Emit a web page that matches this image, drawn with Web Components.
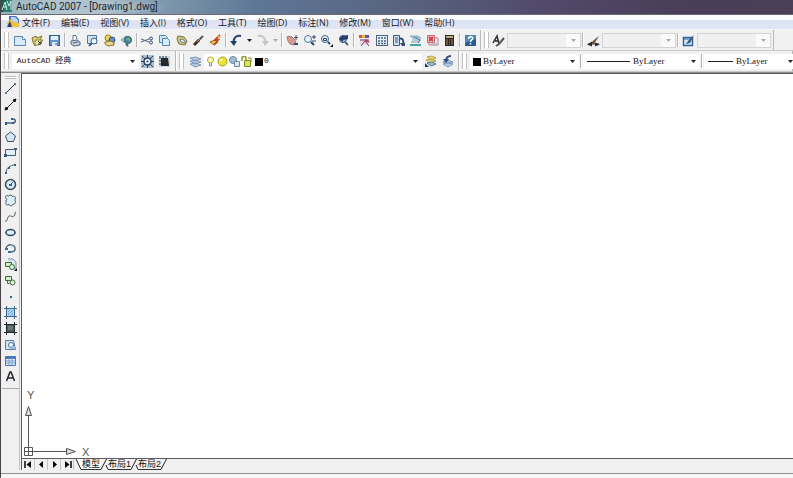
<!DOCTYPE html>
<html lang="zh-CN">
<head>
<meta charset="utf-8">
<title>AutoCAD 2007 - [Drawing1.dwg]</title>
<style>
html, body { margin: 0; height: 100%; }
body { overflow: hidden; background: #f0f0f0; }
</style>
</head>
<body>
<cad-window></cad-window>
<script>
const ICONS = {
  app: '<rect width="11" height="12" fill="#2f7f73"/><path d="M0 0h5L2 12H0z" fill="#1d5c58"/><path d="M1 10 4 2l2 8M6 1l2 5 2-5v9M2 7h4" stroke="#c9f0e4" fill="none"/>',
  doc: '<path d="M2 0h7l3 3v8H2z" fill="#4a79bd"/><path d="M4 1h4l3 3v3H4z" fill="#bcd3f2"/><path d="M0 7l4-4 2 3 6 1v4H1z" fill="#f0bf3c"/><path d="M0 11 3 5l2 6z" fill="#31405e"/>',
  new: '<path d="M.5 2.500h8l3 3v6h-11z" fill="#d6eaf8" stroke="#5d87ab"/><path d="M8.500 2.500v3h3" fill="#fff" stroke="#5d87ab"/>',
  open: '<path d="M1 4l4-2 1 2 5-2-2 4-5 6-2-4z" fill="#e0d27a" stroke="#77752f"/><path d="M4 6h8l-4 5H4z" fill="#f5eaa5" stroke="#8f8636"/><path d="M7 7l3 3M10 7v3H7" stroke="#333" fill="none"/>',
  save: '<rect x="1.500" y="1.500" width="10" height="10" fill="#5f94cc" stroke="#2f5f93"/><rect x="3" y="2" width="7" height="4" fill="#e3f0fb"/><rect x="4" y="8" width="5" height="4" fill="#dbe9f5"/><path d="M8 9v2" stroke="#2f5f93"/>',
  print: '<path d="M4 6V1.500h3l1 4" fill="#fff" stroke="#66788f"/><path d="M2 7l6-1 3 2v3l-6 1-3-2z" fill="#c5cfdd" stroke="#56687f"/><path d="M4 9l5-1" stroke="#56687f"/>',
  preview: '<path d="M1.500 1.500h9v8h-9z" fill="#cfe3f5" stroke="#52799f"/><circle cx="8" cy="7" r="3" fill="#eaf6ff" stroke="#40617f"/><path d="M6 9l-3 3" stroke="#40617f" stroke-width="2"/>',
  publish: '<circle cx="5" cy="4" r="3" fill="#f2d64f" stroke="#9a8020"/><circle cx="9" cy="6" r="3" fill="#5d8cc6" stroke="#31547f"/><path d="M2 8l6-1 3 2v2l-6 1-3-2z" fill="#ead785" stroke="#8a7430"/>',
  web: '<path d="M1 6l5-4 5 3-4 5z" fill="#a9c9dd" stroke="#7a9cb8"/><circle cx="8" cy="6" r="3.500" fill="#4f8ea0" stroke="#2f5f73"/><path d="M6 5l3-1 1 3" fill="#7dbb6b"/><path d="M6 10l2 2" stroke="#40617f" stroke-width="2"/>',
  cut: '<path d="M0 5l8 3M0 8l8-3" stroke="#56687f"/><circle cx="10" cy="4.500" r="1.500" fill="none" stroke="#34506f"/><circle cx="10" cy="8.500" r="1.500" fill="none" stroke="#34506f"/>',
  copy: '<path d="M1.500 1.500h6l2 2v5h-8z" fill="#cfe3f5" stroke="#4f86b3"/><path d="M4.500 4.500h5l2 2v5h-7z" fill="#d9ecf9" stroke="#4f86b3"/>',
  paste: '<path d="M3 2l6 1 3 4-2 4-6-1-2-5z" fill="#d9c97c" stroke="#7b6f38"/><path d="M5 5l4 1 2 3-5-1z" fill="#e8f3fb" stroke="#6b8095"/>',
  brush: '<path d="M11 2L6 7" stroke="#555" stroke-width="2"/><path d="M7 6L2 11" stroke="#4a2f23" stroke-width="3"/><path d="M8 5L5 8" stroke="#a98c70"/>',
  block: '<path d="M1 8l5-2 3 2-4 3z" fill="#ecd04a" stroke="#8a6d20"/><path d="M11 1L6 6l3 0-4 5" fill="none" stroke="#c24b22" stroke-width="2"/><path d="M9 2l2 2" stroke="#e9b93a" stroke-width="2"/>',
  undo: '<path d="M11 2C6 1 3 4 3.500 10" fill="none" stroke="#223f68" stroke-width="2"/><path d="M0 7h7l-3 5z" fill="#223f68"/>',
  redo: '<path d="M2 2c5-1 8 2 7.500 8" fill="none" stroke="#c3c7cb" stroke-width="2"/><path d="M6 7h7l-4 5z" fill="#c3c7cb"/>',
  pan: '<path d="M1 3l2-1 2 2V2l3 3 2 3-2 3-4-1-2-3z" fill="#d59c91" stroke="#b0746a"/><path d="M10 1v5M8 3.500h4" stroke="#334e75"/><path d="M8 10h4" stroke="#334e75" stroke-width="2"/>',
  zoomrt: '<circle cx="5" cy="5" r="3.500" fill="#e3f1fc" stroke="#56789a"/><path d="M8 8l3 3" stroke="#2e4564" stroke-width="2"/><path d="M11 1v4M9 3h4M9 7h4" stroke="#35475f"/>',
  zoomwin: '<circle cx="5" cy="5" r="3.500" fill="#e3f1fc" stroke="#41668c"/><path d="M3.500 4.500h3v2h-3z" fill="none" stroke="#345"/><path d="M8 8l2 2" stroke="#2e4564" stroke-width="2"/><path d="M13 10v3h-3z" fill="#111"/>',
  zoomprev: '<circle cx="6" cy="5" r="3.500" fill="#9fbbe0" stroke="#334f7d"/><path d="M8 8l3 3" stroke="#5a626e" stroke-width="2"/><path d="M11 1L5 2 2 5l4 3V6l5-1z" fill="#27406e"/>',
  props: '<path d="M1 1h3v3H1z" fill="#d94b4b"/><path d="M4 1h3v3H4z" fill="#efb52b"/><path d="M7 1h4v3H7z" fill="#5454c6"/><path d="M2 5h8v6H2z" fill="#ecd7e6"/><path d="M2 6h9M3 12l4-5 4 5" stroke="#74416f" fill="none"/><path d="M7 6l4 2" stroke="#b24a55" stroke-width="2"/>',
  center: '<rect x="1.500" y="1.500" width="11" height="10" fill="#e4f0f8" stroke="#49637e"/><path d="M3 4h2M6 4h2M9 4h2M3 7h2M6 7h2M9 7h2M3 9.500h2M6 9.500h2M9 9.500h2" stroke="#49637e" stroke-width="1.500"/>',
  palettes: '<path d="M1.500 1.500h6v10h-6z" fill="#cfe0f1" stroke="#395c89"/><path d="M3 4h3M3 6h3M3 8h3" stroke="#395c89"/><path d="M7 4.500h2c2 0 2.500 2 2.500 6" fill="none" stroke="#2c4a74" stroke-width="2"/><path d="M8 9h5v3h-3z" fill="#2c4a74"/>',
  sheet: '<path d="M1 2h8l3 2H4z" fill="#9fc5da" stroke="#8aaec6"/><path d="M3 6h9M2 8h9" stroke="#7c9fb8"/><path d="M5 3l6 3-2 3" fill="none" stroke="#4d7ca0"/><path d="M1 11h11" stroke="#48a3a7" stroke-width="2"/>',
  markup: '<path d="M1.500 1.500h7v7h-7z" fill="#f7cfd0" stroke="#cf6570"/><path d="M3 3l4 4M7 3L3 7" stroke="#cf3f4c" stroke-width="2"/><path d="M9 4h3v7H3V9" fill="none" stroke="#bf7e89"/><path d="M5 10h6" stroke="#91a5bb"/>',
  calc: '<rect x="2" y="1" width="9" height="11" fill="#32261f"/><rect x="3" y="2" width="7" height="2" fill="#b9a987"/><path d="M3 6h2M6 6h1M8 6h2M3 8h2M6 8h1M8 8h2M3 10h2M6 10h1M8 10h2" stroke="#a08a64"/>',
  help: '<rect x="1" y="1" width="11" height="11" fill="#285d8f"/><path d="M1 1h11v4L1 9z" fill="#4d87b8"/><path d="M4.500 5c0-3 5-3 4 0-.5 1-2 1-2 3M6.500 9v1.500" stroke="#fff" stroke-width="1.500" fill="none"/>',
  textstyle: '<path d="M1 9L5 2l2 8M3 7h4" fill="none" stroke="#2d2d2d" stroke-width="1.500"/><path d="M12 4L7 10l-3 2" stroke="#555" stroke-width="2" fill="none"/>',
  dimstyle: '<path d="M1 10h11" stroke="#26303b"/><path d="M12 2L7 6 3 10h4z" fill="#6b4c3c"/><path d="M0 10.500l5-3v5zM13 10.500l-5-2v4z" fill="#26303b"/>',
  tablestyle: '<rect x="1.500" y="3.500" width="9" height="8" fill="#d7e8fa" stroke="#36639d" stroke-width="1.500"/><path d="M2 5h8" stroke="#36639d"/><path d="M12 1L6 7l-2 3 4-1z" fill="#36547e"/>',
  gear: '<rect width="13" height="13" fill="#a8bfd4"/><circle cx="6.500" cy="6.500" r="3.500" fill="#e7eff7" stroke="#2d4157" stroke-width="1.500"/><path d="M1 1l3 3M12 1L9 4M1 12l3-3M12 12L9 9M6.500 0v3M6.500 10v3M0 6.500h3M10 6.500h3" stroke="#2d4157"/><circle cx="6.500" cy="6.500" r="1" fill="#2d4157"/>',
  space: '<rect x="1" y="1" width="11" height="11" fill="#cbd7e3"/><path d="M3 3h7l1 8H3z" fill="#26282c"/><path d="M2 1v3M5 1v2M8 1v2M1 6h2M1 9h2" stroke="#303b4b"/>',
  layers: '<path d="M1 3l6-1 5 2-6 2zM1 6l6-1 5 2-6 2zM1 9l6-1 5 2-6 2z" fill="#b8cbe0" stroke="#8299b5"/>',
  layerprev: '<path d="M3 2l5-1 4 2-5 2zM2 5l5-1 5 2-6 2z" fill="#e8d873" stroke="#b3a347"/><path d="M3 8l5-1 4 2-5 2z" fill="#9ebfda" stroke="#4f7798"/><path d="M1 8v4h4z" fill="#25364c"/>',
  layerback: '<path d="M2 7l5-2 5 2-5 2zM2 9l5-2 5 2-5 3z" fill="#b9cfe6" stroke="#7f9cbf"/><path d="M10 1C6 1 5 3 5 6" stroke="#314f7e" stroke-width="2" fill="none"/><path d="M2 4h6L5 8z" fill="#314f7e"/>',
  bulb: '<circle cx="6.500" cy="5" r="3" fill="#fff8b4" stroke="#b1a644"/><path d="M5.500 8v3h2V8" fill="#dfe4ea" stroke="#8e94a0"/>',
  sun: '<circle cx="6.500" cy="6.500" r="4.500" fill="#e8e43a" stroke="#a2a01e"/><circle cx="5" cy="5" r="1.500" fill="#f8f6a4"/>',
  vp: '<circle cx="5" cy="5" r="3.500" fill="#9fbccb" stroke="#6d8b9e"/><path d="M6.500 6.500h5v5h-5z" fill="#dbe7ee" stroke="#6d8b9e"/>',
  lock: '<path d="M2 6V3c0-2 4-2 4 0v3" fill="none" stroke="#8b9b27" stroke-width="1.500"/><path d="M4.500 5.500h6v6h-6z" fill="#dde25c" stroke="#7e8b22"/><path d="M8 3h3v4" stroke="#7e8b22" fill="none"/>',
  swatch: '<rect x="3" y="3" width="8" height="8" fill="#000"/>',
  line: '<path d="M2 11L11 2" stroke="#303a46"/><path d="M1 10h2v2H1zM10 1h2v2h-2z" fill="#4d7690"/>',
  xline: '<path d="M2 11L11 2" stroke="#222"/><path d="M1 12l1-3 2 2zM12 1l-3 1 2 2z" fill="#111" stroke="#111"/>',
  pline: '<path d="M1 9h8c3 0 3-4 0-4H8" fill="none" stroke="#4a6178" stroke-width="1.500"/><path d="M1 8h2v3H1zM7 4h2v2H7zM8 8h2v2H8z" fill="#305a86"/>',
  polygon: '<path d="M6.500 2l5 4-2 5.500h-6l-2-5.500z" fill="#d5e6f0" stroke="#3b5366"/>',
  rect: '<path d="M1.500 3.500h10v6h-10z" fill="#e3eff7" stroke="#435b70"/><path d="M0 8h3v3H0zM10 2h3v2h-3z" fill="#355a80"/>',
  arc: '<path d="M2 11C2 6 6 3 11 3" stroke="#3b5a73" fill="none"/><path d="M1 10h2v2H1zM10 2h2v2h-2zM4 5h2v2H4z" fill="#32628c"/>',
  circle: '<circle cx="6.500" cy="6.500" r="5" fill="#dbeaf3" stroke="#354d62" stroke-width="1.500"/><path d="M5 8l4-4" stroke="#32628c"/><path d="M5 6h3v2H5z" fill="#32628c"/>',
  cloud: '<path d="M3 5.500C0 3 2 .5 4.500 2 6 .5 8 1 8.500 2.500c3-1 4 2 2 3.500 2 1.500 1 4.500-1.500 4C8 12.500 5.500 12 5 10.500 2 12 .5 9 2.500 8 1.500 7 2 6 3 5.500z" fill="#dfedf5" stroke="#3b5669"/>',
  spline: '<path d="M1 11c3 1 2-4 4-5s3 2 5 0 0-3 2-4" fill="none" stroke="#46535f"/>',
  ellipse: '<ellipse cx="6.500" cy="6.500" rx="4.500" ry="3" fill="#e1edf5" stroke="#2f4b67" stroke-width="1.500"/><path d="M1 6h2v1H1zM10 6h2v1h-2z" fill="#2e639e"/>',
  earc: '<path d="M2 7c0-6 10-5 9 0 0 3-3 3-5 3" fill="none" stroke="#4c6985" stroke-width="1.500"/><path d="M1 6h3v2H1zM4 9h3v2H4z" fill="#3c6c98"/>',
  insert: '<path d="M4 1h5l3 3v7H6" fill="#dbe8f3" stroke="#7795ad"/><path d="M1.500 4.500h6v4h-6z" fill="#d5edcb" stroke="#396d37"/><circle cx="8" cy="9" r="2.500" fill="#e1f2da" stroke="#396d37"/><path d="M13 10v3h-3z" fill="#111"/>',
  make: '<path d="M1.500 2.500h6v4h-6z" fill="#d5edcb" stroke="#396d37"/><circle cx="8.500" cy="8.500" r="2.500" fill="#e1f2da" stroke="#396d37"/><path d="M3.500 7v2.500h2" fill="none" stroke="#396d37"/>',
  point: '<path d="M6 6h2v2H6z" fill="#2f6a8d"/>',
  hatch: '<path d="M2.500 2.500h8v8h-8z" fill="#a9d0f0" stroke="#39678f"/><path d="M2.500 0v13M10.500 0v13M0 2.500h13M0 10.500h13" stroke="#39678f"/><path d="M4 9l5-5M4 6l2-2M7 9l2-2" stroke="#76a9d2"/>',
  gradient: '<path d="M2 2h9v9H2z" fill="#4e5658"/><path d="M2.500 0v13M10.500 0v13M0 2.500h13M0 10.500h13" stroke="#202a2c"/><path d="M4 5h5M4 7h5" stroke="#8d9999"/>',
  region: '<path d="M1.500 2.500h8l2 9h-10z" fill="#d2e4f3" stroke="#5581a7"/><circle cx="7" cy="7" r="2.500" fill="#f4f9fd" stroke="#446f95"/><path d="M7 8h4v3H6z" fill="#9abada"/>',
  table: '<path d="M1.500 2.500h10v9h-10z" fill="#e4effb" stroke="#4778b4"/><path d="M1 4h11" stroke="#4778b4" stroke-width="2"/><path d="M2 7h9M2 9h9M5 4v7M8 4v7" stroke="#78a1d2"/>',
  mtext: '<path d="M2.500 11L6 2h1l3.500 9M4 8h5" fill="none" stroke="#20262e" stroke-width="1.500"/>',
  drop: '<path d="M4 5h5L6.500 8z" fill="#223"/>',
  dropoff: '<path d="M4 5h5L6.500 8z" fill="#aaa"/>',
  first: '<path d="M3 3v7" stroke="#000" stroke-width="1.500"/><path d="M9 3v7L4.500 6.500z"/>',
  prev: '<path d="M8 3v7L4 6.500z"/>',
  next: '<path d="M5 3v7l4-3.500z"/>',
  last: '<path d="M4 3v7l4.500-3.500z"/><path d="M10 3v7" stroke="#000" stroke-width="1.500"/>'
};
const svg = (name) => `<svg width="13" height="13" viewBox="0 0 13 13" aria-hidden="true">${ICONS[name]}</svg>`;

function define(tag, render) {
  customElements.define(tag, class extends HTMLElement {
    connectedCallback() {
      if (this.shadowRoot) return;
      const t = document.createElement('template');
      t.innerHTML = render(this);
      this.attachShadow({ mode: 'open' }).append(t.content.cloneNode(true));
    }
  });
}
const attr = (el, name, other = '') => el.getAttribute(name) ?? other;

define('cad-icon', el => `
<style>:host{display:block;flex:none;width:13px;height:13px}svg{display:block}</style>${svg(attr(el, 'name'))}`);

define('tool-button', el => `
<style>
:host{display:block;flex:none;width:17px}
:host([narrow]){width:9px}
:host([tall]){height:16px}
button{display:flex;align-items:center;justify-content:center;width:100%;height:100%;margin:0;padding:0;border:0;background:none;overflow:hidden}
button:hover{background:#dbe6f3}
svg{display:block;flex:none}
</style><button type="button" aria-label="${attr(el, 'label')}">${svg(attr(el, 'icon'))}</button>`);

define('tool-sep', () => `
<style>:host{display:block;flex:none;box-sizing:border-box;width:4px;padding:2px 1px}i{display:block;box-sizing:border-box;width:2px;height:100%;border-left:1px solid #b4b4b4;background:#fff}</style><i></i>`);

define('tool-bar', () => `
<style>
:host{display:flex;align-items:stretch;flex:none;min-width:0;box-sizing:border-box;border-right:1px solid #b9b9b9;border-left:1px solid #fff;padding:1px 2px 1px 0}
:host([grow]){flex:1}
:host([tight]){padding-right:1px}
.grip{flex:none;width:3px;margin:1px 3px 1px 2px;border:solid #c2c2c2;border-width:0 1px;background:#fff}
:host([near]) .grip{margin-right:1px}
</style><span class="grip"></span><slot></slot>`);

define('combo-box', el => `
<style>
:host{display:flex;flex:none;align-items:center;position:relative;box-sizing:border-box;height:15px;align-self:center;background:#fff;color:#111;font:8px/12px "Liberation Mono","Noto Sans CJK SC",monospace}
:host([off]){background:linear-gradient(to left,#fafafa 14px,#f0f0f0 14px);border:1px solid #d4d4d4}
:host([serif]){font:9px/12px "Liberation Serif",serif}
.lead{display:flex;flex:none;align-items:center}
select{flex:1;min-width:0;height:13px;margin:0;padding:0 14px 0 0;border:0;appearance:none;background:none;color:inherit;font:inherit;opacity:1}
cad-icon{margin-left:-14px;pointer-events:none}
</style><span class="lead"><slot></slot></span><select aria-label="${attr(el, 'label')}" ${el.hasAttribute('off') ? 'disabled' : ''}><option>${attr(el, 'value')}</option></select><cad-icon name="${el.hasAttribute('off') ? 'dropoff' : 'drop'}"></cad-icon>`);

define('title-bar', () => `
<style>
:host{display:flex;flex:none;align-items:center;gap:2px;box-sizing:border-box;height:15px;padding-bottom:1px;border-bottom:1px solid #6c6878;
background:radial-gradient(ellipse 90px 14px at 75px 7px,#c5d2daaa 50%,transparent),linear-gradient(to right,#8fb0b8,#8099ae 20%,#5e7795 32%,#57617f 52%,#524a6a 68%,#493d57 88%,#4b4058);color:#1b2530;font:10px/13px Roboto,sans-serif}
h1{margin:0;font:inherit}
</style><cad-icon name="app"></cad-icon><h1><slot></slot></h1>`);

define('menu-item', () => `
<style>:host{display:block;flex:none}button{display:block;margin:0;padding:0;border:0;background:none;color:#1a1a22;font:9px/13px "Open Sans","Noto Sans CJK SC",sans-serif;white-space:nowrap}</style><button type="button"><slot></slot></button>`);

define('menu-bar', () => `
<style>:host{display:flex;flex:none;align-items:center;height:15px;padding-left:6px;background:linear-gradient(#fbfcfe 35%,#dde3f3 36%,#dfe5f4);border-bottom:1px solid #f8f8f8;box-sizing:border-box}
nav{display:flex;gap:11px;margin-left:2px}</style><cad-icon name="doc"></cad-icon><nav><slot></slot></nav>`);

define('tool-row', () => `
<style>:host{display:flex;flex:none;height:20px;background:#f1f1f1;border-bottom:1px solid #c9c9c9;overflow:hidden}</style><slot></slot>`);

define('draw-palette', () => `
<style>
:host{display:block;flex:none;width:18px;box-sizing:border-box;border-right:1px solid #c4c4c4}
.bar{border-bottom:1px solid #aaa;padding:3px 0 4px}
.grip{box-sizing:border-box;height:3px;margin:0 3px 1px;border:solid #bbb;border-width:1px 0;background:#fff}
</style><div class="bar"><div class="grip"></div><slot></slot></div>`);

define('ucs-mark', () => `
<style>:host{display:block}svg{display:block}text{font:11px "Liberation Sans",sans-serif;fill:#555}</style>
<svg width="80" height="71" viewBox="0 0 80 71" fill="none" stroke="#555"><path d="M2.500 60.500h8v8h-8zM2 64.500h43M6.500 69V24"/><path d="M6.500 19.500l3 9h-6zM53.500 64.500l-9-3v6z" fill="#ddd"/><g stroke="none"><text x="5" y="12">Y</text><text x="60" y="69">X</text></g></svg>`);

define('drawing-area', () => `
<style>:host{display:flex;flex:1;align-items:flex-end;min-height:0;background:#fff;border:solid #5c5c5c;border-width:1px 0 1px 1px}</style><ucs-mark></ucs-mark>`);

define('sheet-tab', el => `
<style>
:host{display:flex;flex:none;height:11px;margin-right:-4px}
svg{display:block;flex:none}
button{box-sizing:border-box;height:11px;margin:0;padding:0;border:0;border-bottom:1px solid #333;background:none;color:#111;font:9px/10px "Liberation Sans","Noto Sans CJK SC",sans-serif;white-space:nowrap}
:host([active]) button{background:#fff;padding:0 1px}
</style>
<svg width="5" height="11" viewBox="0 0 5 11">${el.hasAttribute('active') ? '<path d="M0 0h5v11z" fill="#fff"/><path d="M0 0l5 10.500" stroke="#222"/>' : '<path d="M3 6l2 4.500" stroke="#222"/>'}</svg><button type="button" role="tab" aria-selected="${el.hasAttribute('active')}"><slot></slot></button><svg width="6" height="11" viewBox="0 0 6 11"><path d="M5.500 0L0 10.500" stroke="#222"/></svg>`);

define('sheet-tabs', () => `
<style>
:host{display:flex;flex:none;height:11px;border-left:1px solid #5c5c5c;background:#f1f1f1}
.nav{display:flex}
.nav tool-button{width:13px;border-right:1px solid #c4c4c4;box-sizing:border-box;height:11px}
.tabs{display:flex;margin-left:2px}
</style><div class="nav"><tool-button icon="first" label="第一个"></tool-button><tool-button icon="prev" label="上一个"></tool-button><tool-button icon="next" label="下一个"></tool-button><tool-button icon="last" label="最后一个"></tool-button></div><div class="tabs" role="tablist"><slot></slot></div>`);

const buttons = (list, extra = '') => list.map(([icon, label]) =>
  icon === '|' ? '<tool-sep></tool-sep>' :
  icon === 'v' ? `<tool-button narrow icon="${label}" label="更多"></tool-button>` :
  `<tool-button ${extra} icon="${icon}" label="${label}"></tool-button>`).join('');

const STANDARD = [['new','新建'],['open','打开'],['save','保存'],['|'],['print','打印'],['preview','打印预览'],['publish','发布'],['web','三维 DWF'],['|'],
  ['cut','剪切'],['copy','复制'],['paste','粘贴'],['brush','特性匹配'],['block','块编辑器'],['|'],['undo','放弃'],['v','drop'],['redo','重做'],['v','dropoff'],['|'],
  ['pan','实时平移'],['zoomrt','实时缩放'],['zoomwin','窗口缩放'],['zoomprev','缩放上一个'],['|'],
  ['props','特性'],['center','设计中心'],['palettes','工具选项板'],['sheet','图纸集管理器'],['markup','标记集管理器'],['calc','快速计算器'],['|'],['help','帮助']];
const DRAW = [['line','直线'],['xline','构造线'],['pline','多段线'],['polygon','正多边形'],['rect','矩形'],['arc','圆弧'],['circle','圆'],['cloud','修订云线'],['spline','样条曲线'],['ellipse','椭圆'],['earc','椭圆弧'],['insert','插入块'],['make','创建块'],['point','点'],['hatch','图案填充'],['gradient','渐变色'],['region','面域'],['table','表格'],['mtext','多行文字']];
const MENUS = ['文件(F)','编辑(E)','视图(V)','插入(I)','格式(O)','工具(T)','绘图(D)','标注(N)','修改(M)','窗口(W)','帮助(H)'];

define('cad-window', () => `
<style>
:host{display:flex;flex-direction:column;box-sizing:border-box;height:100vh;border-left:1px solid #4a4345;background:#f0f0f0;overflow:hidden}
.work{display:flex;flex:1;min-height:0;padding-left:1px;border-top:1px solid #8d8d8d}
.sheet{display:flex;flex:1;flex-direction:column;min-width:0;margin-left:1px}
.status{flex:none;height:4px;margin-top:3px;border-top:1px solid #8f8f8f;background:#f6f6f6}
.style{width:74px}
.space{width:127px}
.layer{width:218px}
.color{width:109px}
.ltype{width:117px}
.lweight{width:93px}
.stroke{height:1px;background:#222}
.ltype .stroke{width:43px;margin:0 3px 0 4px}
.lweight .stroke{width:25px;margin:0 3px 0 4px}
.layer cad-icon{margin-right:-1px}
</style>
<title-bar>AutoCAD 2007 - [Drawing1.dwg]</title-bar>
<menu-bar>${MENUS.map(m => `<menu-item>${m}</menu-item>`).join('')}</menu-bar>
<tool-row>
<tool-bar tight>${buttons(STANDARD)}</tool-bar>
<tool-bar near><tool-button icon="textstyle" label="文字样式"></tool-button><combo-box class="style" off label="文字样式"></combo-box><tool-sep></tool-sep><tool-button icon="dimstyle" label="标注样式"></tool-button><combo-box class="style" off label="标注样式"></combo-box><tool-sep></tool-sep><tool-button icon="tablestyle" label="表格样式"></tool-button><combo-box class="style" off label="表格样式"></combo-box></tool-bar>
</tool-row>
<tool-row>
<tool-bar><combo-box class="space" label="工作空间" value="&nbsp;AutoCAD 经典"></combo-box><tool-button icon="gear" label="工作空间设置"></tool-button><tool-button icon="space" label="我的工作空间"></tool-button></tool-bar>
<tool-bar><tool-button icon="layers" label="图层特性"></tool-button><combo-box class="layer" label="图层" value="0"><cad-icon name="bulb"></cad-icon><cad-icon name="sun"></cad-icon><cad-icon name="vp"></cad-icon><cad-icon name="lock"></cad-icon><cad-icon name="swatch"></cad-icon></combo-box><tool-button icon="layerprev" label="置为当前图层"></tool-button><tool-button icon="layerback" label="上一个图层"></tool-button></tool-bar>
<tool-bar grow><combo-box class="color" serif label="颜色" value="ByLayer"><cad-icon name="swatch"></cad-icon></combo-box><tool-sep></tool-sep><combo-box class="ltype" serif label="线型" value="ByLayer"><span class="stroke"></span></combo-box><tool-sep></tool-sep><combo-box class="lweight" serif label="线宽" value="ByLayer"><span class="stroke"></span></combo-box></tool-bar>
</tool-row>
<div class="work">
<draw-palette>${buttons(DRAW, 'tall')}</draw-palette>
<div class="sheet"><drawing-area></drawing-area><sheet-tabs><sheet-tab active>模型</sheet-tab><sheet-tab>布局1</sheet-tab><sheet-tab>布局2</sheet-tab></sheet-tabs></div>
</div>
<div class="status"></div>`);
</script>
</body>
</html>
